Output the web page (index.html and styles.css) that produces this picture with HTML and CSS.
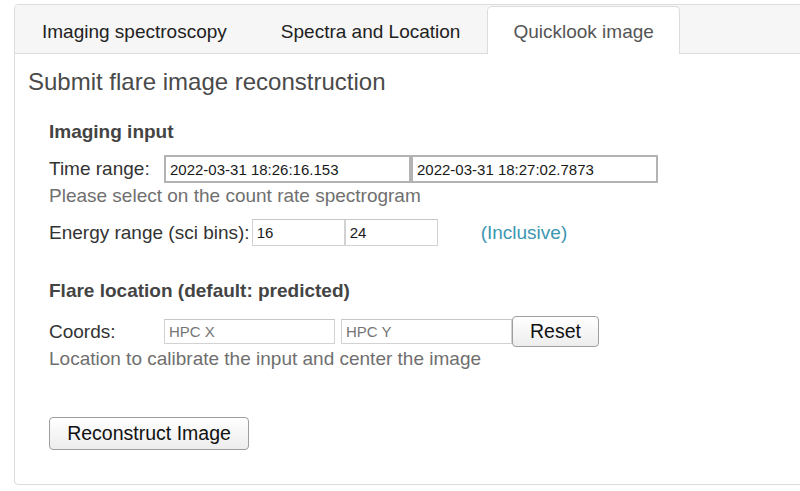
FILE: index.html
```html
<!DOCTYPE html>
<html>
<head>
<meta charset="utf-8">
<link rel="stylesheet" href="styles.css">
</head>
<body>
<div class="panel">
  <div class="tabbar">
    <div class="tab">Imaging spectroscopy</div>
    <div class="tab">Spectra and Location</div>
    <div class="tab active">Quicklook image</div>
  </div>
  <div class="content">
    <h2 class="title">Submit flare image reconstruction</h2>
    <div class="section">
      <h3 class="heading first">Imaging input</h3>
      <div class="row row-time">
        <span class="label fixed">Time range:</span>
        <input class="inp dark time" type="text" value="2022-03-31 18:26:16.153">
        <input class="inp dark time" type="text" value="2022-03-31 18:27:02.7873">
      </div>
      <div class="help">Please select on the count rate spectrogram</div>
      <div class="row row-energy">
        <span class="label">Energy range (sci bins):</span>
        <input class="inp light energy" type="text" value="16">
        <input class="inp light energy" type="text" value="24">
        <span class="note">(Inclusive)</span>
      </div>
      <h3 class="heading second">Flare location (default: predicted)</h3>
      <div class="row row-coords">
        <span class="label fixed">Coords:</span>
        <input class="inp light coord" type="text" placeholder="HPC X">
        <input class="inp light coord gap" type="text" placeholder="HPC Y">
        <button class="btn reset">Reset</button>
      </div>
      <div class="help tight">Location to calibrate the input and center the image</div>
      <button class="btn big">Reconstruct Image</button>
    </div>
  </div>
</div>
</body>
</html>
```

FILE: styles.css
```css
html, body {
  margin: 0;
  padding: 0;
  background: #fff;
  font-family: "Liberation Sans", Arial, sans-serif;
}

body {
  padding: 4px 0 0 14px;
  overflow: hidden;
  width: 800px;
  height: 491px;
  box-sizing: border-box;
}

.panel {
  width: 820px;
  border: 1px solid #dcdcdc;
  border-radius: 4px;
  box-sizing: border-box;
  padding-bottom: 34px;
}

.tabbar {
  display: flex;
  align-items: flex-end;
  height: 48px;
  background: #f6f6f6;
  border-bottom: 1px solid #dcdcdc;
  border-radius: 4px 4px 0 0;
}

.tab {
  height: 47px;
  padding: 0 26px;
  box-sizing: border-box;
  line-height: 49px;
  font-size: 19px;
  color: #222;
  border: 1px solid transparent;
  border-bottom: none;
  white-space: nowrap;
}

.tab.active {
  background: #fff;
  color: #555;
  border-color: #dcdcdc;
  border-radius: 5px 5px 0 0;
  height: 48px;
  margin-bottom: -1px;
  padding: 0 25px 0 25px;
}

.content {
  padding: 14px 0 0 13px;
}

.title {
  margin: 0;
  font-size: 24px;
  line-height: 28px;
  font-weight: normal;
  color: #4a4a4a;
}

.section {
  padding-left: 21px;
}

.heading {
  margin: 0;
  font-size: 19px;
  line-height: 22px;
  font-weight: bold;
  color: #444;
}

.heading.first {
  margin-top: 25px;
}

.heading.second {
  margin-top: 34px;
}

.row {
  display: flex;
  align-items: center;
}

.label {
  font-size: 19px;
  color: #333;
  white-space: nowrap;
}

.label.fixed {
  width: 115px;
  flex: none;
}

.row-time {
  margin-top: 12px;
  height: 28px;
}

.row-energy {
  margin-top: 12px;
  height: 27px;
}

.row-coords {
  margin-top: 14px;
  height: 31px;
}

.inp {
  font-family: "Liberation Sans", Arial, sans-serif;
  font-size: 15px;
  color: #1a1a1a;
  box-sizing: border-box;
  padding: 0 4px;
  margin: 0;
  outline: none;
  background: #fff;
}

.inp.dark {
  border: 2px solid #b3b3b3;
  height: 28px;
}

.inp.light {
  border: 1px solid #d2d2d2;
  border-top-color: #c6c6c6;
}

.inp.time {
  width: 247px;
}

.inp.energy {
  width: 93px;
  height: 27px;
}

.inp.energy:first-of-type {
  margin-left: 2px;
}

.inp.coord {
  width: 171px;
  height: 25px;
}

.inp.coord::placeholder {
  color: #757575;
}

.inp.coord.gap {
  margin-left: 6px;
}

.note {
  margin-left: 43px;
  font-size: 19px;
  color: #3d97b0;
}

.help {
  margin-top: 2px;
  font-size: 19px;
  line-height: 22px;
  color: #6f6f6f;
}

.help.tight {
  margin-top: 1px;
}

.btn {
  font-family: "Liberation Sans", Arial, sans-serif;
  font-size: 19.5px;
  color: #111;
  background: linear-gradient(#ffffff, #ededed);
  border: 1px solid #9e9e9e;
  border-radius: 4px;
  box-sizing: border-box;
  padding: 0;
  margin: 0;
}

.btn.reset {
  width: 87px;
  height: 31px;
}

.btn.big {
  display: block;
  width: 200px;
  height: 33px;
  margin-top: 47px;
}
```
